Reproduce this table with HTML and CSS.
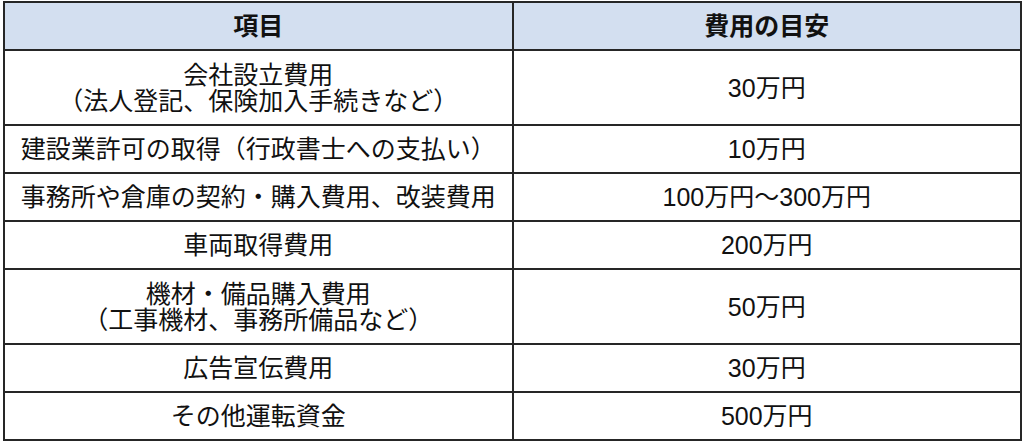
FILE: index.html
```html
<!DOCTYPE html>
<html lang="ja">
<head>
<meta charset="utf-8">
<link rel="stylesheet" href="styles.css">
</head>
<body>
<table class="cost-table">
  <thead>
    <tr>
      <th class="cell head">項目</th>
      <th class="cell head">費用の目安</th>
    </tr>
  </thead>
  <tbody>
    <tr class="tall">
      <td class="cell">会社設立費用<br>（法人登記、保険加入手続きなど）</td>
      <td class="cell">30万円</td>
    </tr>
    <tr>
      <td class="cell">建設業許可の取得（行政書士への支払い）</td>
      <td class="cell">10万円</td>
    </tr>
    <tr>
      <td class="cell">事務所や倉庫の契約・購入費用、改装費用</td>
      <td class="cell">100万円～300万円</td>
    </tr>
    <tr>
      <td class="cell">車両取得費用</td>
      <td class="cell">200万円</td>
    </tr>
    <tr class="tall">
      <td class="cell">機材・備品購入費用<br>（工事機材、事務所備品など）</td>
      <td class="cell">50万円</td>
    </tr>
    <tr>
      <td class="cell">広告宣伝費用</td>
      <td class="cell">30万円</td>
    </tr>
    <tr>
      <td class="cell">その他運転資金</td>
      <td class="cell">500万円</td>
    </tr>
  </tbody>
</table>
</body>
</html>
```

FILE: styles.css
```css
html, body {
  margin: 0;
  padding: 0;
  background: #ffffff;
}

body {
  padding: 1px 0 0 3px;
  font-family: "Liberation Sans", "Noto Sans CJK JP", sans-serif;
  color: #111111;
}

.cost-table {
  width: 1019px;
  border-collapse: separate;
  border-spacing: 0;
  border-top: 2px solid #262626;
  border-left: 2px solid #262626;
  table-layout: fixed;
}

.cell {
  width: 50%;
  height: 46px;
  padding: 0;
  border-right: 2px solid #262626;
  border-bottom: 2px solid #262626;
  text-align: center;
  vertical-align: middle;
  font-size: 25px;
  line-height: 26px;
  font-weight: normal;
}

.head {
  background: #d3dff0;
  font-weight: bold;
}

.tall .cell {
  height: 73px;
}
```
